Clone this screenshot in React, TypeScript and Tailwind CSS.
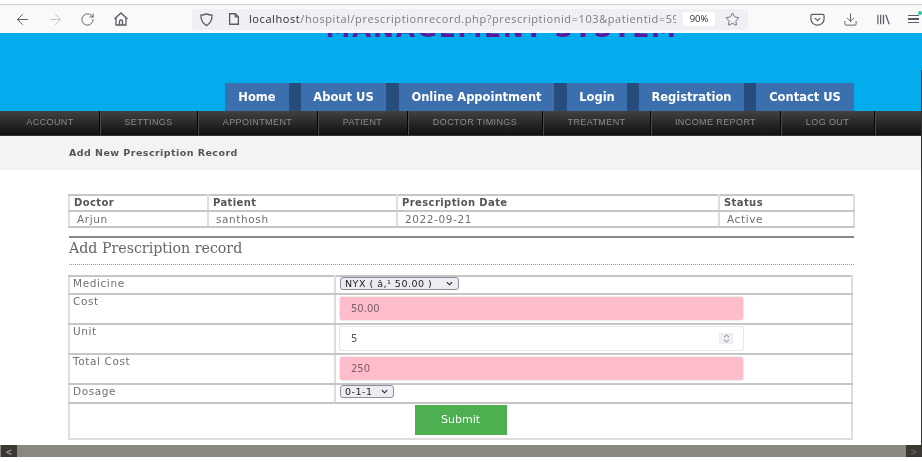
import React from "react";
import { ArrowLeft, ArrowRight, RotateCw, Download, Star } from "lucide-react";

const tabs = [
  ["Home", "w-[64px]"],
  ["About US", "w-[85px]"],
  ["Online Appointment", "w-[155px]"],
  ["Login", "w-[60px]"],
  ["Registration", "w-[105px]"],
  ["Contact US", "w-[98px]"],
];

const menu = [
  ["ACCOUNT", "w-[99px]"],
  ["SETTINGS", "w-[98px]"],
  ["APPOINTMENT", "w-[120px]"],
  ["PATIENT", "w-[90px]"],
  ["DOCTOR TIMINGS", "w-[135px]"],
  ["TREATMENT", "w-[108px]"],
  ["INCOME REPORT", "w-[130px]"],
  ["LOG OUT", "w-[94px]"],
];

function Toolbar() {
  return (
    <div className="h-[33px] bg-white">
      <div className="h-[4px] bg-white" />
      <div className="h-[1px] bg-[#d6d0cc]" />
      <div className="flex h-[28px] items-center bg-[#f9f9fa] text-[#5b5b66]">
        <ArrowLeft className="ml-[14px] h-[17px] w-[17px]" strokeWidth={1.4} />
        <ArrowRight className="ml-[16px] h-[17px] w-[17px] text-[#c4c4c8]" strokeWidth={1.4} />
        <RotateCw className="ml-[16px] h-[15px] w-[15px]" strokeWidth={1.5} />
        <svg className="ml-[18px] h-[16px] w-[16px]" viewBox="0 0 16 16" fill="none" stroke="currentColor" strokeWidth="1.3">
          <path d="M1.5 8 8 2l6.500 6" />
          <path d="M3 7v7h10V7" />
          <path d="M6.500 14v-3.500a1.500 1.500 0 0 1 3 0V14" />
        </svg>
        <div className="ml-[63px] flex h-[21px] w-[556px] items-center rounded-[4px] bg-[#f0f0f4]">
          <svg className="ml-[7px] h-[15px] w-[15px] shrink-0" viewBox="0 0 16 16" fill="none" stroke="currentColor" strokeWidth="1.3">
            <path d="M8 2c2 1 4 1.300 6 1.300C14 9 12 12.500 8 14.500 4 12.500 2 9 2 3.300 4 3.300 6 3 8 2Z" />
          </svg>
          <svg className="ml-[13px] h-[14px] w-[14px] shrink-0" viewBox="0 0 16 16" fill="none" stroke="currentColor" strokeWidth="1.5">
            <path d="M3 2h6.500L13 5.500V14H3Z" />
            <path d="M9.500 2v3.500H13" />
          </svg>
          <div className="ml-[8px] w-[427px] shrink-0 overflow-hidden whitespace-nowrap font-['Open_Sans',sans-serif] text-[11px] tracking-[0.58px] text-[#7a7a80]">
            <span className="text-[#2b2a33]">localhost</span>/hospital/prescriptionrecord.php?prescriptionid=103&amp;patientid=59
          </div>
          <div className="ml-[7px] flex h-[14px] w-[32px] shrink-0 items-center justify-center rounded-[2px] bg-white font-['Open_Sans',sans-serif] text-[9.5px] text-[#2b2a33]">
            90%
          </div>
          <Star className="ml-[10px] h-[15px] w-[15px] shrink-0" strokeWidth={1.4} />
        </div>
        <svg className="ml-[62px] h-[15px] w-[15px]" viewBox="0 0 16 16" fill="none" stroke="currentColor" strokeWidth="1.3">
          <path d="M2.500 2.500h11a1.500 1.500 0 0 1 1.500 1.500v3.500a7 6.500 0 0 1-14 0V4a1.500 1.500 0 0 1 1.500-1.500Z" />
          <path d="M5 6.500 8 9l3-2.500" />
        </svg>
        <Download className="ml-[18px] h-[15px] w-[15px]" strokeWidth={1.5} />
        <svg className="ml-[18px] h-[15px] w-[15px]" viewBox="0 0 16 16" fill="none" stroke="currentColor" strokeWidth="1.3">
          <path d="M2 3v10M5 3v10M8 3v10M10.500 3l3.500 10" />
        </svg>
        <div className="relative ml-[17px] flex w-[11px] flex-col gap-[2px]">
          <div className="h-[1.500px] bg-[#5b5b66]" />
          <div className="h-[1.500px] bg-[#5b5b66]" />
          <div className="h-[1.500px] bg-[#5b5b66]" />
          <div className="absolute right-[-3px] top-[-4px] h-[4px] w-[4px] rounded-full bg-[#2ac3a2]" />
        </div>
      </div>
    </div>
  );
}

function Header() {
  return (
    <div className="h-[78px] overflow-hidden bg-[#02aced]">
      <div className="flex h-[50px] justify-center overflow-hidden pl-[81px]">
        <div className="-mt-[16px] h-[24px] whitespace-nowrap font-['DejaVu_Sans',sans-serif] text-[25px] font-bold leading-[24px] tracking-[1.65px] text-[#5a1a9a]">
          MANAGEMENT SYSTEM
        </div>
      </div>
      <div className="flex h-[28px] pl-[225px]">
        {tabs.map(([label, w], i) => (
          <React.Fragment key={label}>
            {i > 0 && <div className={i === 2 || i === 3 ? "w-[13px] bg-[#264d7c]" : "w-[12px] bg-[#264d7c]"} />}
            <div className={`flex items-center justify-center bg-[#3b6fae] pt-[1px] font-['DejaVu_Sans',sans-serif] text-[11.500px] font-bold text-white ${w}`}>
              {label}
            </div>
          </React.Fragment>
        ))}
      </div>
    </div>
  );
}

function MenuBar() {
  return (
    <div className="flex h-[25px] border-b border-[#333] bg-gradient-to-b from-[#424242] to-[#111111] pl-[1px]">
      {menu.map(([label, w]) => (
        <div
          key={label}
          className={`flex items-center justify-center border-r border-[#050505] font-['Liberation_Sans',sans-serif] text-[9px] tracking-[0.4px] text-[#8d8d8d] shadow-[1px_0_0_#4a4a4a] ${w}`}
        >
          {label}
        </div>
      ))}
    </div>
  );
}

const gridCell = "border-x-2 border-y-2 border-x-[#dedede] border-y-[#c6c6c6]";
const labelCell = `${gridCell} px-[3px] align-top text-[10.500px] leading-[13px] tracking-[0.6px] text-[#707070]`;
const valueCell = `${gridCell} pl-[4px] pr-[2px] align-top`;

function PinkInput({ value }: { value: string }) {
  return (
    <div className="flex h-[23px] w-[403px] items-center rounded-[2px] bg-[#ffbccb] px-[11px] text-[10px] text-[#7a6068] shadow-[0_0_0_1px_#eee]">
      {value}
    </div>
  );
}

function NativeSelect({ value, w }: { value: string; w: string }) {
  return (
    <div className={`flex h-[13px] items-center justify-between rounded-[3px] border border-[#8f8f9d] bg-[#ecedf2] pl-[4px] pr-[5px] text-[9.500px] leading-none tracking-[0.5px] text-[#222] ${w}`}>
      <span>{value}</span>
      <svg className="h-[7px] w-[7px]" viewBox="0 0 8 8" fill="none" stroke="#222" strokeWidth="1.300">
        <path d="M1 2.500 4 5.500 7 2.500" />
      </svg>
    </div>
  );
}

function Content() {
  return (
    <div className="h-[309px] bg-white font-['DejaVu_Sans',sans-serif]">
      <div className="flex h-[34px] items-center bg-[#f3f3f3] pl-[69px] text-[9.500px] font-bold tracking-[0.45px] text-[#555]">
        Add New Prescription Record
      </div>
      <div className="ml-[69px] w-[785px] pt-[24px]">
        <table className="-ml-[1px] w-full table-fixed border-collapse">
          <colgroup>
            <col className="w-[139px]" />
            <col className="w-[189px]" />
            <col className="w-[322px]" />
            <col className="w-[135px]" />
          </colgroup>
          <tbody>
            <tr className="h-[16px] text-[10px] font-bold tracking-[0.4px] text-[#555]">
              {["Doctor", "Patient", "Prescription Date", "Status"].map((h) => (
                <td key={h} className={`${gridCell} px-[4px] leading-[12px]`}>{h}</td>
              ))}
            </tr>
            <tr className="h-[16px] text-[10.500px] tracking-[0.6px] text-[#707070]">
              {["Arjun", "santhosh", "2022-09-21", "Active"].map((h) => (
                <td key={h} className={`${gridCell} px-[7px] leading-[12px]`}>{h}</td>
              ))}
            </tr>
          </tbody>
        </table>
        <div className="mt-[8px] h-[2px] bg-[#888]" />
        <div className="flex h-[20px] items-center pt-[2px] font-['DejaVu_Serif',serif] text-[14.200px] text-[#666]">
          Add Prescription record
        </div>
        <div className="mt-[6px] border-t border-dotted border-[#999]" />
        <table className="-ml-[1px] mt-[10px] w-full table-fixed border-collapse">
          <colgroup>
            <col className="w-[266px]" />
            <col />
          </colgroup>
          <tbody>
            <tr className="h-[18px]">
              <td className={labelCell}>Medicine</td>
              <td className={valueCell}>
                <NativeSelect value="NYX ( â‚¹ 50.00 )" w="w-[119px]" />
              </td>
            </tr>
            <tr className="h-[30px]">
              <td className={labelCell}>Cost</td>
              <td className={valueCell}>
                <div className="pt-[2px]"><PinkInput value="50.00" /></div>
              </td>
            </tr>
            <tr className="h-[30px]">
              <td className={labelCell}>Unit</td>
              <td className={valueCell}>
                <div className="pt-[2px]">
                  <div className="flex h-[23px] w-[403px] items-center justify-between rounded-[2px] bg-white pl-[11px] pr-[10px] text-[10px] text-[#555] shadow-[0_0_0_1px_#e6e6e6]">
                    <span>5</span>
                    <div className="flex h-[11px] w-[14px] items-center justify-center bg-[#efeff3]">
                      <svg className="h-[9px] w-[7px]" viewBox="0 0 7 9" fill="none" stroke="#777" strokeWidth="0.900">
                        <path d="M1 3.200 3.500 1 6 3.200M1 5.800 3.500 8 6 5.800" />
                      </svg>
                    </div>
                  </div>
                </div>
              </td>
            </tr>
            <tr className="h-[30px]">
              <td className={labelCell}>Total Cost</td>
              <td className={valueCell}>
                <div className="pt-[2px]"><PinkInput value="250" /></div>
              </td>
            </tr>
            <tr className="h-[19px]">
              <td className={labelCell}>Dosage</td>
              <td className={valueCell}>
                <NativeSelect value="0-1-1" w="w-[54px]" />
              </td>
            </tr>
            <tr className="h-[36px]">
              <td colSpan={2} className="border-2 border-x-[#dedede] border-t-[#c6c6c6] border-b-[#dedede] align-top">
                <div className="flex justify-center pt-[1px]">
                  <div className="flex h-[30px] w-[92px] items-center justify-center bg-[#4caf50] pt-[1px] text-[11px] text-white">
                    Submit
                  </div>
                </div>
              </td>
            </tr>
          </tbody>
        </table>
      </div>
    </div>
  );
}

function Scrollbar() {
  return (
    <div className="flex h-[12px] items-stretch bg-[#8a8780]">
      <div className="ml-[1px] flex w-[16px] items-center justify-center bg-[#3b3833] text-[11px] font-bold leading-none text-[#999]">&lt;</div>
      <div className="flex-1" />
      <div className="flex w-[16px] items-center justify-center bg-[#3b3833] text-[11px] font-bold leading-none text-[#666]">&gt;</div>
    </div>
  );
}

export default function App() {
  return (
    <div className="relative h-[462px] w-[922px] overflow-hidden bg-white blur-[0.35px]">
      <Toolbar />
      <Header />
      <MenuBar />
      <Content />
      <Scrollbar />
      <div className="absolute bottom-[17px] right-0 top-[70px] w-[1px] bg-[#333]" />
    </div>
  );
}
